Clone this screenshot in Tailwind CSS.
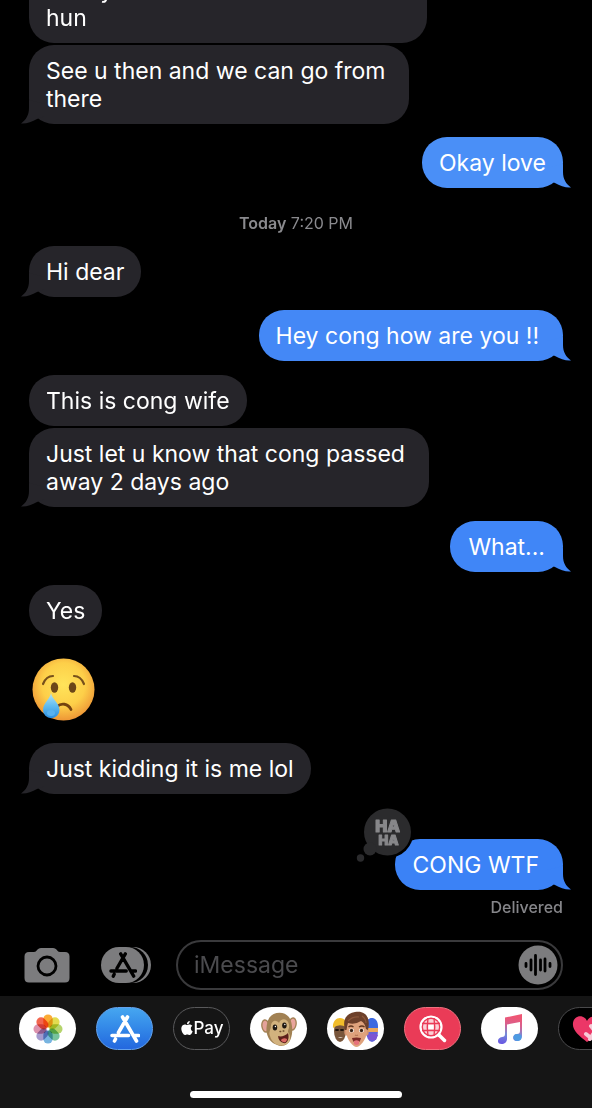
<!DOCTYPE html>
<html lang="en">
<head>
    <meta charset="UTF-8">
    <meta name="viewport" content="width=device-width, initial-scale=1.0">
    <title>Messages</title>
    <script src="https://cdn.jsdelivr.net/npm/@tailwindcss/browser@4"></script>
</head>
<body class="flex h-screen flex-col overflow-hidden bg-black font-['Inter',sans-serif] text-white">
    <!-- shared shapes -->
    <svg class="absolute size-0" aria-hidden="true">
        <symbol id="tail-right" viewBox="0 0 24 24"><path d="M0 4 16 0V8C16 15 19 20 24 23.5C19 24 13 22 8 19L0 16Z"/></symbol>
        <symbol id="tail-left" viewBox="0 0 24 24"><path d="M24 4 8 0V8C8 15 5 20 0 23.5C5 24 11 22 16 19L24 16Z"/></symbol>
        <symbol id="app-store" viewBox="0 0 30 28">
            <path d="M17.5 2 8.5 17.5M12.5 2 26.5 26M2 20.5H18.5M23.5 20.5H28.5M5.5 24 4.5 26" fill="none" stroke="currentColor" stroke-width="3.6" stroke-linecap="round"/>
        </symbol>
    </svg>

    <main class="flex min-h-0 flex-1 flex-col items-start justify-end px-[29px] text-[23px] leading-[28px]">
        <p class="w-[398px] max-w-4/5 shrink-0 rounded-[25px] bg-[#26252a] pt-3 pr-6 pb-[11px] pl-[17px]">Friday<br>hun</p>
        <div class="relative mt-0.5 shrink-0 rounded-[25px] bg-[#26252a] pt-3 pr-6 pb-[11px] pl-[17px]">
            <p>See u then and we can go from<br>there</p>
            <svg class="absolute bottom-0 -left-2 size-6 fill-[#26252a]"><use href="#tail-left"/></svg>
        </div>
        <div class="relative mt-[13px] shrink-0 self-end rounded-[25px] bg-[#4a8ff7] px-[17px] pt-3 pb-[11px]">
            <p>Okay love</p>
            <svg class="absolute -right-2 bottom-0 size-6 fill-[#4a8ff7]"><use href="#tail-right"/></svg>
        </div>

        <p class="flex h-[58px] shrink-0 items-center self-center pt-3 text-base text-[#8a8a8e]"><span><b class="font-semibold">Today</b> 7:20 PM</span></p>

        <div class="relative shrink-0 rounded-[25px] bg-[#26252a] px-[17px] pt-3 pb-[11px]">
            <p>Hi dear</p>
            <svg class="absolute bottom-0 -left-2 size-6 fill-[#26252a]"><use href="#tail-left"/></svg>
        </div>
        <div class="relative mt-[13px] shrink-0 self-end rounded-[25px] bg-[#4488f6] pt-3 pr-6 pb-[11px] pl-[17px]">
            <p>Hey cong how are you !!</p>
            <svg class="absolute -right-2 bottom-0 size-6 fill-[#4488f6]"><use href="#tail-right"/></svg>
        </div>
        <p class="mt-3.5 shrink-0 rounded-[25px] bg-[#26252a] px-[17px] pt-3 pb-[11px]">This is cong wife</p>
        <div class="relative mt-0.5 shrink-0 rounded-[25px] bg-[#26252a] pt-3 pr-6 pb-[11px] pl-[17px]">
            <p>Just let u know that cong passed<br>away 2 days ago</p>
            <svg class="absolute bottom-0 -left-2 size-6 fill-[#26252a]"><use href="#tail-left"/></svg>
        </div>
        <div class="relative mt-3.5 shrink-0 self-end rounded-[25px] bg-[#4086f7] px-[18px] pt-3 pb-[11px]">
            <p>What...</p>
            <svg class="absolute -right-2 bottom-0 size-6 fill-[#4086f7]"><use href="#tail-right"/></svg>
        </div>
        <p class="mt-[13px] shrink-0 rounded-[25px] bg-[#26252a] px-[17px] pt-3 pb-[11px]">Yes</p>

        <svg class="mt-[22px] ml-[3px] size-[63px] shrink-0" viewBox="0 0 63 63" role="img" aria-label="Crying face">
            <defs>
                <radialGradient id="face" cx=".5" cy=".42" r=".58"><stop offset="0" stop-color="#ffe45a"/><stop offset=".6" stop-color="#fdcf49"/><stop offset="1" stop-color="#ee9636"/></radialGradient>
                <linearGradient id="tear" x1="0" y1="0" x2="0" y2="1"><stop offset="0" stop-color="#b5e4f5"/><stop offset=".5" stop-color="#62bdf0"/><stop offset="1" stop-color="#2c8fe0"/></linearGradient>
            </defs>
            <circle cx="31.5" cy="31.5" r="31" fill="url(#face)"/>
            <path d="M11 26C13 21 16 18 21 18M42 18C47 18 50 21 52 26" fill="none" stroke="#77501b" stroke-width="2.2" stroke-linecap="round"/>
            <ellipse cx="22.5" cy="29.5" rx="3.7" ry="5.2" fill="#6b4618"/>
            <ellipse cx="40.5" cy="29.5" rx="3.7" ry="5.2" fill="#6b4618"/>
            <path d="M25 48.5C29 45 36 45 39 51.500" fill="none" stroke="#74420f" stroke-width="2.8" stroke-linecap="round"/>
            <path d="M19 35C20 41 27.5 45 27.5 52A8 8 0 0 1 11 52C11 45 18 41 19 35Z" fill="url(#tear)"/>
            <ellipse cx="19" cy="55" rx="4" ry="3" fill="#58b2f0"/>
        </svg>

        <div class="relative mt-[22px] shrink-0 rounded-[25px] bg-[#26252a] px-[17px] pt-3 pb-[11px]">
            <p>Just kidding it is me lol</p>
            <svg class="absolute bottom-0 -left-2 size-6 fill-[#26252a]"><use href="#tail-left"/></svg>
        </div>
        <div class="relative mt-[45px] shrink-0 self-end rounded-[25px] bg-[#3b82f6] pt-3 pr-6 pb-[11px] pl-[18px]">
            <p>CONG WTF</p>
            <svg class="absolute -right-2 bottom-0 size-6 fill-[#3b82f6]"><use href="#tail-right"/></svg>
            <!-- tapback -->
            <svg class="absolute -top-8 -left-10 h-[58px] w-[60px]" viewBox="0 0 60 58" role="img" aria-label="Laughed">
                <circle cx="32.5" cy="25" r="26" fill="#000"/>
                <circle cx="32.5" cy="25" r="23.5" fill="#2b2b2d"/>
                <circle cx="15" cy="42" r="6.5" fill="#2b2b2d"/>
                <circle cx="5.5" cy="51" r="3.7" fill="#2b2b2d"/>
                <text fill="#87878a" stroke="#87878a" stroke-width="1" stroke-linejoin="round" font-weight="900" text-anchor="middle"><tspan x="32.5" y="25" font-size="16">HA</tspan><tspan x="33.5" y="38" font-size="13">HA</tspan></text>
            </svg>
        </div>
        <p class="mt-[7px] mb-[23px] shrink-0 self-end text-base leading-5 font-medium text-[#86868a]">Delivered</p>
    </main>

    <form class="flex items-center pr-[29px] pb-1.5 pl-6">
        <button type="button" aria-label="Camera">
            <svg class="h-9 w-[46px]" viewBox="0 0 46 36">
                <path d="M5 5H10C13 5 13 1 17 1H29C33 1 33 5 36 5H41Q45.5 5 45.5 9.5V31Q45.5 35.5 41 35.5H5Q.5 35.5 .5 31V9.5Q.5 5 5 5Z" fill="#7c7c7e"/>
                <circle cx="23" cy="19" r="9" fill="none" stroke="#000" stroke-width="2.8"/>
            </svg>
        </button>
        <button type="button" class="ml-[31px] text-black" aria-label="Apps">
            <svg class="h-9 w-[50px]" viewBox="0 0 50 36">
                <rect x="11" width="39" height="36" rx="18" fill="#7c7c7e"/>
                <rect x="3" width="44" height="36" rx="18" fill="#000"/>
                <rect width="43" height="36" rx="18" fill="#7c7c7e"/>
                <use href="#app-store" x="8" y="5" width="28" height="26"/>
            </svg>
        </button>
        <div class="ml-[25px] flex h-[50px] min-w-0 flex-1 items-center rounded-full border-2 border-[#3a3a3c] pr-[3px] pl-4">
            <input type="text" placeholder="iMessage" aria-label="iMessage" class="min-w-0 flex-1 bg-transparent text-[23px] outline-none placeholder:text-[#4b4b4e]">
            <button type="button" aria-label="Record audio">
                <svg class="size-10" viewBox="0 0 40 40">
                    <circle cx="20" cy="20" r="19.5" fill="#7c7c7e"/>
                    <path d="M8 18.5V21.5M13 15V25M17.5 10.5V29.5M22.5 15V25M27 14V26M32 18.5V21.5" stroke="#000" stroke-width="2.8" stroke-linecap="round"/>
                </svg>
            </button>
        </div>
    </form>

    <footer class="flex h-28 shrink-0 flex-col items-center justify-between bg-[#151515] pt-[11px] pb-2.5">
        <nav class="flex w-full gap-5 overflow-hidden pl-[19px]" aria-label="iMessage apps">
            <button type="button" class="flex h-[43px] w-[57px] shrink-0 items-center justify-center rounded-full bg-white" aria-label="Photos">
                <svg class="size-[30px]" viewBox="-16 -16 32 32">
                    <g class="[&>rect]:mix-blend-multiply">
                        <rect x="-5" y="-15.5" width="10" height="14" rx="5" fill="#fbab35"/>
                        <rect x="-5" y="-15.5" width="10" height="14" rx="5" fill="#e2dc50" transform="rotate(45)"/>
                        <rect x="-5" y="-15.5" width="10" height="14" rx="5" fill="#b5d46c" transform="rotate(90)"/>
                        <rect x="-5" y="-15.5" width="10" height="14" rx="5" fill="#77c39c" transform="rotate(135)"/>
                        <rect x="-5" y="-15.5" width="10" height="14" rx="5" fill="#78b4e0" transform="rotate(180)"/>
                        <rect x="-5" y="-15.5" width="10" height="14" rx="5" fill="#a59bce" transform="rotate(225)"/>
                        <rect x="-5" y="-15.5" width="10" height="14" rx="5" fill="#dc93ae" transform="rotate(270)"/>
                        <rect x="-5" y="-15.5" width="10" height="14" rx="5" fill="#f2664f" transform="rotate(315)"/>
                    </g>
                </svg>
            </button>
            <button type="button" class="flex h-[43px] w-[57px] shrink-0 items-center justify-center rounded-full border border-[#63a2ee] bg-linear-to-b from-[#46a6f0] to-[#2467de] text-white" aria-label="App Store">
                <svg class="h-7 w-[30px]"><use href="#app-store"/></svg>
            </button>
            <button type="button" class="flex h-[43px] w-[57px] shrink-0 items-center justify-center rounded-full border border-[#59595b] text-[17px] font-medium" aria-label="Apple Pay">
                <svg class="mb-0.5 size-3.5 shrink-0 fill-white" viewBox="0 0 24 24"><path d="M12.152 6.896c-.948 0-2.415-1.078-3.96-1.04-2.04.027-3.91 1.183-4.961 3.014-2.117 3.675-.546 9.103 1.519 12.09 1.013 1.454 2.208 3.09 3.792 3.039 1.52-.065 2.09-.987 3.935-.987 1.831 0 2.35.987 3.96.948 1.637-.026 2.676-1.48 3.676-2.948 1.156-1.688 1.636-3.325 1.662-3.415-.039-.013-3.182-1.221-3.22-4.857-.026-3.04 2.48-4.494 2.597-4.559-1.429-2.09-3.623-2.324-4.39-2.376-2-.156-3.675 1.09-4.61 1.09zM15.53 3.83c.843-1.012 1.4-2.427 1.245-3.83-1.207.052-2.662.805-3.532 1.818-.78.896-1.454 2.338-1.273 3.714 1.338.104 2.715-.688 3.559-1.701"/></svg>
                <span>Pay</span>
            </button>
            <button type="button" class="flex h-[43px] w-[57px] shrink-0 items-center justify-center rounded-full bg-white" aria-label="Animoji">
                <svg class="h-9 w-9" viewBox="0 0 40 36" preserveAspectRatio="none">
                    <ellipse cx="5" cy="15" rx="4" ry="6" fill="#e5a29a" stroke="#a48256" stroke-width="1.5" transform="rotate(-10 5 15)"/>
                    <ellipse cx="35" cy="13" rx="4" ry="6" fill="#e9a49c" stroke="#a48256" stroke-width="1.5" transform="rotate(10 35 13)"/>
                    <path d="M8 9C11 1 25-1 31 6C35 11 36 21 33 28C30 35 23 36 18 34C11 32 7 27 6 20Q6 13 8 9Z" fill="#a18153"/>
                    <path d="M11 15C12 8 18 9 20 12C22 7 29 7 31 13C32 17 30 18 30 21C34 25 33 33 26 34C19 36 12 32 10 25C8 21 11 19 11 15Z" fill="#d2b27e"/>
                    <ellipse cx="15.5" cy="16.5" rx="2.5" ry="3" fill="#1f1812"/>
                    <ellipse cx="26" cy="14.5" rx="2.5" ry="3" fill="#1f1812"/>
                    <circle cx="16" cy="15.5" r=".8" fill="#fff"/><circle cx="26.5" cy="13.5" r=".8" fill="#fff"/>
                    <path d="M21 20.5H22M24.5 20H25.5" stroke="#6b4c2c" stroke-width="1.3" stroke-linecap="round"/>
                    <path d="M19 25C22 26 27 25 30 22C32 28 29 33 25 32C21 31 19 28 19 25Z" fill="#5b1f1b"/>
                    <path d="M22 29Q25 26 29 28Q28 32 25 31Q23 31 22 29Z" fill="#dc6763"/>
                </svg>
            </button>
            <button type="button" class="flex h-[43px] w-[57px] shrink-0 items-center justify-center rounded-full bg-white" aria-label="Memoji">
                <svg class="h-[38px] w-[51px]" viewBox="0 0 51 38">
                    <ellipse cx="10" cy="21" rx="6" ry="11" fill="#79563b"/>
                    <path d="M3 18C2 8 11 5 16 11V17Q9 13 3 18Z" fill="#f2bd2b"/>
                    <path d="M6 20H8M11 20H13" stroke="#20140d" stroke-width="1.8" stroke-linecap="round"/>
                    <path d="M8 27Q10 29 13 27Z" fill="#d9c8bb"/>
                    <ellipse cx="42" cy="21" rx="6" ry="11" fill="#6262d9"/>
                    <path d="M36 16C35 6 48 5 48 16V18H36Z" fill="#3d6ae0"/>
                    <path d="M37 18H48V22H37Z" fill="#eba85b"/>
                    <path d="M38 25Q43 22 48 25L46 30H39Z" fill="#7d55d2"/>
                    <ellipse cx="16.5" cy="22" rx="2.2" ry="3.5" fill="#d79672"/>
                    <ellipse cx="36.5" cy="22" rx="2.2" ry="3.5" fill="#d79672"/>
                    <path d="M16 14Q26 6 37 14V22C36 30 30 37 26.5 37S17 30 16 22Z" fill="#dfa27c"/>
                    <path d="M15 20C12 9 17 3 25 2C35 0 41 7 38 20L36 19Q35 13 31 11Q25 15 18 13Q17 16 16.5 20Z" fill="#6d402a"/>
                    <path d="M18 11Q23 6 29 7M32 6Q36 9 36 13" fill="none" stroke="#8c573b" stroke-width="1.2"/>
                    <path d="M18.500 17Q21 15 23.5 17M29 17Q32 15 34.5 17" fill="none" stroke="#60361f" stroke-width="1.3"/>
                    <ellipse cx="21.5" cy="20.5" rx="2.5" ry="2" fill="#fff"/><ellipse cx="31.5" cy="20.5" rx="2.5" ry="2" fill="#fff"/>
                    <circle cx="21.5" cy="20.5" r="1.7" fill="#3d2415"/><circle cx="31.5" cy="20.5" r="1.7" fill="#3d2415"/>
                    <path d="M25 25Q26.5 26 28 25" fill="none" stroke="#b77955" stroke-width="1.2"/>
                    <path d="M22 28Q26.5 27 31 28Q30 33 26.5 33T22 28Z" fill="#7b2a25"/>
                    <path d="M24 31Q26.5 29.5 29 31V34Q26.5 36 24 34Z" fill="#e7727a"/>
                </svg>
            </button>
            <button type="button" class="flex h-[43px] w-[57px] shrink-0 items-center justify-center rounded-full border border-[#f0707f] bg-[#ea3b57] text-white" aria-label="Images">
                <svg class="size-7" viewBox="0 0 28 28" fill="none" stroke="currentColor">
                    <circle cx="12" cy="12" r="10.5" stroke-width="2.2"/>
                    <circle cx="12" cy="12" r="8" fill="#fbd0d6" stroke="none"/>
                    <path d="M20 20 25.5 25.5" stroke-width="3.5" stroke-linecap="round"/>
                    <path d="M3 8.5H21M3 15.5H21M9 3Q7.500 12 9 21M15 3Q16.500 12 15 21" stroke="#ea3b57" stroke-width="1.4"/>
                    <path d="M9.5 10H14.5V14H9.5Z" fill="currentColor" stroke="none"/>
                </svg>
            </button>
            <button type="button" class="flex h-[43px] w-[57px] shrink-0 items-center justify-center rounded-full bg-white" aria-label="Music">
                <svg class="h-8 w-[26px]" viewBox="0 0 26 32">
                    <defs><linearGradient id="note" gradientUnits="userSpaceOnUse" x1="16" y1="4" x2="12" y2="31"><stop offset="0" stop-color="#ee5674"/><stop offset=".3" stop-color="#d7608f"/><stop offset=".65" stop-color="#738bd9"/><stop offset="1" stop-color="#6a5be2"/></linearGradient></defs>
                    <path d="M8 4.5 25 1V23C25 26 22 28 19.5 28C15 28 15 21 20 21C22 21 23 20 23 18V9L10 11.5V26C10 29 7.5 31 4.5 31C-.5 31 0 24.5 5 24C7 24 8 23 8 21Z" fill="url(#note)"/>
                    <ellipse cx="20.5" cy="24.5" rx="4" ry="3.4" fill="#4e9be2"/>
                </svg>
            </button>
            <button type="button" class="flex h-[43px] w-[57px] shrink-0 items-center justify-center rounded-full border border-[#4a4a4c] bg-black" aria-label="Digital Touch">
                <svg class="h-7 w-[30px]" viewBox="0 0 30 28">
                    <path d="M15 27C7 21 0 15 1 8C2 0 12-1 15 6C18-1 29 0 29 9C29 16 22 22 15 27Z" fill="#ec3767"/>
                    <path d="M18 24 25 13M14 19 19 23M19 11 23 16" stroke="#f6cbd7" stroke-width="4" stroke-linecap="round"/>
                </svg>
            </button>
        </nav>
        <div class="h-[7px] w-[212px] rounded-full bg-white"></div>
    </footer>
</body>
</html>
